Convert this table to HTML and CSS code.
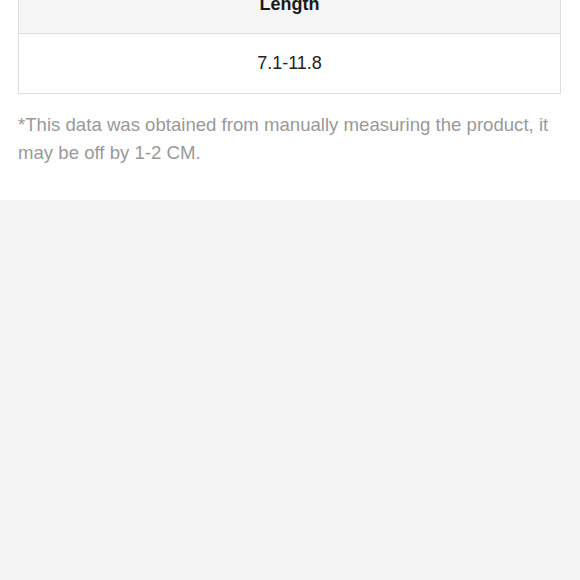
FILE: index.html
```html
<!DOCTYPE html>
<html>
<head>
<meta charset="utf-8">
<link rel="stylesheet" href="styles.css">
</head>
<body>
<section class="sheet">
  <table class="size-table">
    <thead>
      <tr><th>Length</th></tr>
    </thead>
    <tbody>
      <tr><td>7.1-11.8</td></tr>
    </tbody>
  </table>
  <p class="note">*This data was obtained from manually measuring the product, it may be off by 1-2 CM.</p>
</section>
</body>
</html>
```

FILE: styles.css
```css
html, body {
  margin: 0;
  padding: 0;
  background: #f4f4f4;
}
body {
  font-family: "Liberation Sans", Arial, sans-serif;
}
.sheet {
  background: #ffffff;
  margin-top: -26px;
  padding: 0 19px 33px 18px;
}
.size-table {
  width: 100%;
  border-collapse: collapse;
  table-layout: fixed;
}
.size-table th,
.size-table td {
  border: 1px solid #dddddd;
  text-align: center;
  height: 59px;
  padding: 0;
  font-size: 18px;
  color: #222222;
}
.size-table th {
  background: #f5f5f5;
  font-weight: bold;
  color: #1a1a1a;
  height: 58px;
}
.note {
  margin: 17px 0 0 0;
  font-size: 18.6px;
  line-height: 28px;
  color: #999999;
}
```
